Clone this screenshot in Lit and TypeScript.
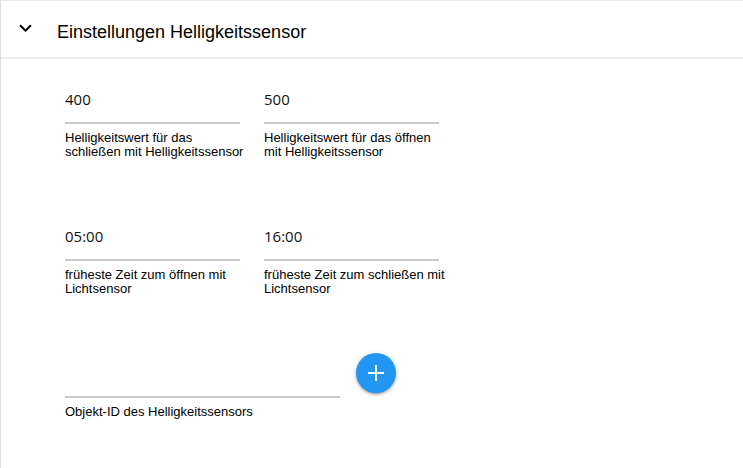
import { LitElement, html, css } from "lit";
import { customElement, property } from "lit/decorators.js";

@customElement("settings-field")
class SettingsField extends LitElement {
  @property() label = "";
  @property() value = "";

  static styles = css`
    :host {
      display: block;
    }
    .input {
      display: block;
      box-sizing: border-box;
      width: 100%;
      height: 48px;
      margin: 0;
      padding: 0 0 1px;
      border: 0;
      border-bottom: 2px solid #c8c8c8;
      border-radius: 0;
      outline: none;
      background: transparent;
      color: #111;
      font: 15px "Open Sans", "Noto Sans", sans-serif;
    }
    .input:focus-visible {
      border-bottom-color: #2196f3;
    }
    .label {
      display: block;
      margin: 7px -10px 0 0;
      font-size: 13px;
      line-height: 14px;
      color: #000;
    }
  `;

  render() {
    return html`
      <input class="input" id="field" type="text" .value=${this.value} />
      <label class="label" for="field">${this.label}</label>
    `;
  }
}

@customElement("app-root")
class AppRoot extends LitElement {
  static styles = css`
    :host {
      display: block;
      box-sizing: border-box;
      min-height: 100vh;
      border-left: 1px solid #ddd;
      border-top: 1px solid #e9e9e9;
      background: #fff;
      color: #000;
      font-family: "Liberation Sans", Arial, sans-serif;
    }
    .heading {
      margin: 0;
      font-weight: 400;
    }
    .toggle {
      display: flex;
      align-items: center;
      box-sizing: border-box;
      width: 100%;
      height: 58px;
      padding: 6px 16px 0;
      gap: 24px;
      border: 0;
      border-bottom: 2px solid #ededed;
      background: transparent;
      color: #000;
      font: 18px "Liberation Sans", Arial, sans-serif;
      text-align: left;
      cursor: pointer;
    }
    .chevron {
      flex: none;
      width: 16px;
      height: 16px;
      margin-bottom: 8px;
    }
    .body {
      display: flex;
      flex-direction: column;
      gap: 54px;
      padding: 17px 64px;
    }
    .row {
      display: flex;
      flex-wrap: wrap;
      gap: 24px;
    }
    .row.picker {
      gap: 16px;
    }
    .short {
      flex: 0 1 175px;
    }
    .long {
      flex: 0 1 275px;
    }
    .add {
      display: grid;
      place-items: center;
      flex: none;
      width: 40px;
      height: 40px;
      margin-top: 3px;
      padding: 0;
      border: 0;
      border-radius: 50%;
      background: #2196f3;
      color: #fff;
      box-shadow: 0 2px 2px rgba(0, 0, 0, 0.14), 0 3px 1px -2px rgba(0, 0, 0, 0.12),
        0 1px 5px rgba(0, 0, 0, 0.2);
      cursor: pointer;
    }
    .plus {
      width: 24px;
      height: 24px;
    }
  `;

  render() {
    return html`
      <h2 class="heading">
        <button class="toggle" type="button" aria-expanded="true" aria-controls="body">
          <svg class="chevron" viewBox="0 0 16 16" fill="none" stroke="currentColor" stroke-width="2" aria-hidden="true">
            <path d="M3.1 5.2 8.5 10.6 13.9 5.2" />
          </svg>
          <span>Einstellungen Helligkeitssensor</span>
        </button>
      </h2>
      <section class="body" id="body">
        <div class="row">
          <settings-field class="short" value="400" label="Helligkeitswert für das schließen mit Helligkeitssensor"></settings-field>
          <settings-field class="short" value="500" label="Helligkeitswert für das öffnen mit Helligkeitssensor"></settings-field>
        </div>
        <div class="row">
          <settings-field class="short" value="05:00" label="früheste Zeit zum öffnen mit Lichtsensor"></settings-field>
          <settings-field class="short" value="16:00" label="früheste Zeit zum schließen mit Lichtsensor"></settings-field>
        </div>
        <div class="row picker">
          <settings-field class="long" label="Objekt-ID des Helligkeitssensors"></settings-field>
          <button class="add" type="button" aria-label="Objekt-ID auswählen">
            <svg class="plus" viewBox="0 0 24 24" fill="currentColor" aria-hidden="true">
              <path d="M20 13h-7v7h-2v-7H4v-2h7V4h2v7h7z" />
            </svg>
          </button>
        </div>
      </section>
    `;
  }
}
